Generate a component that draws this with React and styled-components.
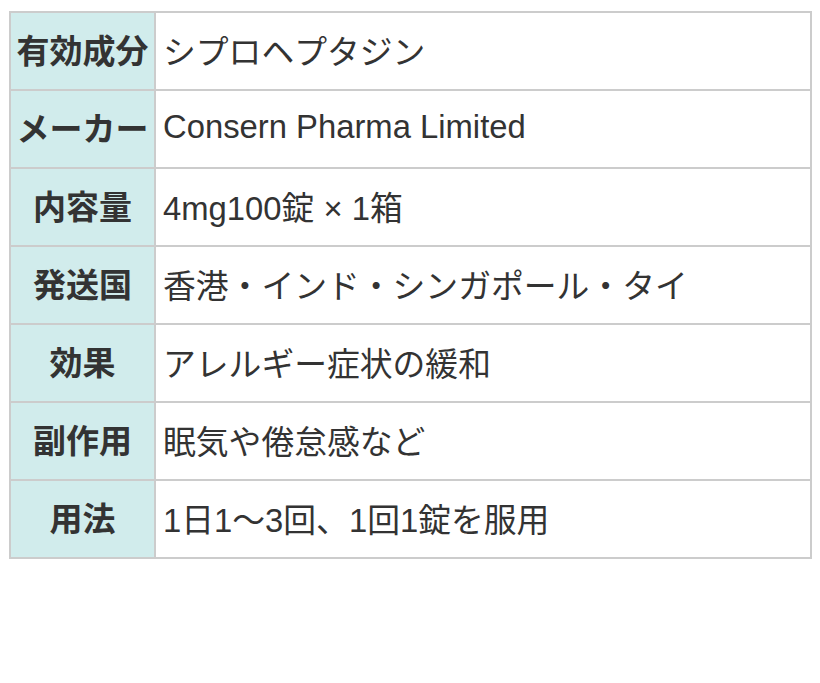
import React from "react";
import styled, { createGlobalStyle } from "styled-components";

const GlobalStyle = createGlobalStyle`
  body {
    margin: 0;
    background: #fff;
    font-family: "Liberation Sans", "Noto Sans CJK JP", sans-serif;
  }
`;

const Page = styled.div`
  padding: 11px 8px 0 9px;
`;

const Table = styled.table`
  width: 803px;
  border-collapse: collapse;
  table-layout: fixed;
  border: 2px solid #cccccc;
`;

const Row = styled.tr`
  height: 78px;
`;

const Head = styled.th`
  width: 133px;
  padding: 0 5px 5px;
  background: #d1ecec;
  border: 2px solid #cccccc;
  color: #333333;
  font-size: 33px;
  font-weight: bold;
  text-align: center;
  white-space: nowrap;
`;

const Cell = styled.td`
  padding: 0 7px 4px;
  border: 2px solid #cccccc;
  color: #333333;
  font-size: 32.8px;
  text-align: left;
  white-space: nowrap;
`;

const rows = [
  ["有効成分", "シプロヘプタジン"],
  ["メーカー", "Consern Pharma Limited"],
  ["内容量", "4mg100錠 × 1箱"],
  ["発送国", "香港・インド・シンガポール・タイ"],
  ["効果", "アレルギー症状の緩和"],
  ["副作用", "眠気や倦怠感など"],
  ["用法", "1日1～3回、1回1錠を服用"],
];

export default function App() {
  return (
    <>
      <GlobalStyle />
      <Page>
        <Table>
          <tbody>
            {rows.map(([label, value]) => (
              <Row key={label}>
                <Head>{label}</Head>
                <Cell>{value}</Cell>
              </Row>
            ))}
          </tbody>
        </Table>
      </Page>
    </>
  );
}
